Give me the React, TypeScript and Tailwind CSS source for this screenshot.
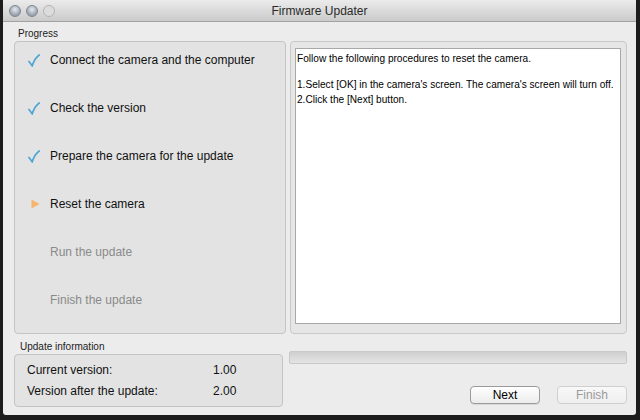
import React from 'react';

const steps = [
  { label: 'Connect the camera and the computer', state: 'done' },
  { label: 'Check the version', state: 'done' },
  { label: 'Prepare the camera for the update', state: 'done' },
  { label: 'Reset the camera', state: 'current' },
  { label: 'Run the update', state: 'todo' },
  { label: 'Finish the update', state: 'todo' },
];

function Check() {
  return (
    <svg width="12" height="13" viewBox="0 0 12 13">
      <path d="M1 7.5 L4.2 11.8 C6 6.5 8.3 3 11.2 1" fill="none" stroke="#4ea6d4" strokeWidth="1.7" strokeLinecap="round" />
    </svg>
  );
}

function Arrow() {
  return (
    <svg width="9" height="10" viewBox="0 0 9 10">
      <path d="M0.5 0.5 L8.5 5 L0.5 9.5 Z" fill="#f6b46c" />
    </svg>
  );
}

function Light() {
  return (
    <div className="w-[12px] h-[12px] rounded-full border border-[#80878f] bg-[radial-gradient(circle_at_50%_35%,#e6eaf0,#97a1ac_70%)]" />
  );
}

export default function App() {
  const ui = { fontFamily: '"Liberation Sans", Arial, sans-serif' };

  return (
    <div className="w-[640px] h-[420px] bg-[#1c1c1c] overflow-hidden" style={ui}>
      <div className="ml-[3px] w-[633px] h-[415px] bg-[#ececec] flex flex-col rounded-b-[3px] overflow-hidden">
        {/* title bar */}
        <div className="h-[22px] shrink-0 flex items-center pl-[6px] bg-gradient-to-b from-[#ebebeb] to-[#cbcbcb] border-b border-[#a2a2a2] relative">
          <div className="flex gap-[5px]">
            <Light />
            <Light />
            <div className="w-[12px] h-[12px] rounded-full border border-[#b4b4b4] bg-[#dcdcdc]" />
          </div>
          <div className="absolute inset-0 flex items-center justify-center text-[12px] text-[#2a2a2a]">
            Firmware Updater
          </div>
        </div>

        <div className="flex-1 flex flex-col pl-[11px] pr-[9px] pt-[5px]">
          <div className="flex gap-[4px]">
            {/* progress */}
            <div className="w-[272px] shrink-0 flex flex-col">
              <div className="text-[10px] text-[#222] pl-[4px] h-[13px] leading-[13px]">Progress</div>
              <div className="mt-[1px] h-[293px] rounded-[4px] border border-[#c4c4c4] bg-[#e3e3e3] pt-[1px] flex flex-col gap-[14px]">
                {steps.map((s) => (
                  <div key={s.label} className="h-[34px] flex items-center">
                    <div className="w-[25px] flex justify-end">
                      {s.state === 'done' && <Check />}
                      {s.state === 'current' && <Arrow />}
                    </div>
                    <div
                      className={
                        'pl-[10px] text-[12px] whitespace-nowrap ' +
                        (s.state === 'todo' ? 'text-[#8a8a8a]' : 'text-[#111]')
                      }
                    >
                      {s.label}
                    </div>
                  </div>
                ))}
              </div>
            </div>

            {/* instructions */}
            <div className="flex-1 min-w-0 pt-[14px]">
              <div className="h-[293px] rounded-[4px] border border-[#c8c8c8] bg-[#e6e6e6] pl-[4px] pr-[5px] pt-[6px] pb-[9px]">
                <div className="h-full bg-white border border-[#a8a8a8] px-[1px] pt-[2px] text-[10.1px] leading-[15px] text-black whitespace-nowrap">
                  <div>Follow the following procedures to reset the camera.</div>
                  <div className="h-[11px]" />
                  <div>1.Select [OK] in the camera's screen. The camera's screen will turn off.</div>
                  <div>2.Click the [Next] button.</div>
                </div>
              </div>
            </div>
          </div>

          <div className="flex gap-[6px] mt-[6px]">
            {/* info */}
            <div className="w-[269px] shrink-0 flex flex-col">
              <div className="text-[10px] text-[#222] pl-[6px] h-[13px] leading-[13px]">Update information</div>
              <div className="mt-[1px] h-[53px] rounded-[4px] border border-[#c4c4c4] bg-[#e3e3e3] pl-[12px] pt-[4px] text-[12px] text-[#111]">
                <div className="h-[21px] flex items-center">
                  <span className="w-[186px]">Current version:</span>
                  <span>1.00</span>
                </div>
                <div className="h-[21px] flex items-center">
                  <span className="w-[186px]">Version after the update:</span>
                  <span>2.00</span>
                </div>
              </div>
            </div>

            <div className="flex-1 flex flex-col">
              <div className="mt-[11px] h-[13px] rounded-[2px] border border-[#c9c9c9] bg-gradient-to-b from-[#cfcfcf] via-[#dadada] to-[#e4e4e4]" />
              <div className="flex justify-end gap-[17px] mt-[22px]">
                <button className="w-[70px] h-[18px] rounded-[4px] border border-[#9a9a9a] bg-gradient-to-b from-white to-[#ececec] text-[12px] leading-[16px] text-black shadow-[0_1px_0_rgba(0,0,0,0.08)]">
                  Next
                </button>
                <button className="w-[70px] h-[18px] rounded-[4px] border border-[#cfcfcf] bg-gradient-to-b from-[#f8f8f8] to-[#efefef] text-[12px] leading-[16px] text-[#9a9a9a]">
                  Finish
                </button>
              </div>
            </div>
          </div>
        </div>
      </div>
    </div>
  );
}
